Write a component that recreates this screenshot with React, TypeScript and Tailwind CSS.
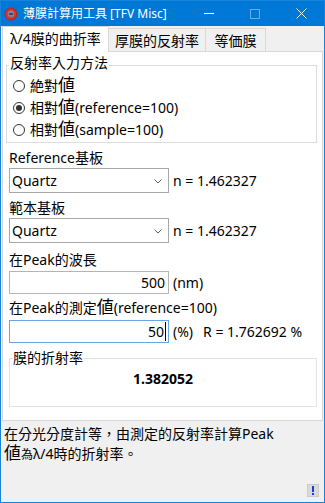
import type { ReactNode } from 'react';

const TABS = ['λ/4膜的曲折率', '厚膜的反射率', '等価膜'];
const TAB_WIDTHS = ['w-[107px]', 'w-[97px]', 'w-[60px]'];

function Big({ children }: { children: ReactNode }) {
  return <span className="text-[17px] leading-none">{children}</span>;
}

function Radio({ checked, children }: { checked?: boolean; children: ReactNode }) {
  return (
    <div className="flex h-[22px] items-center">
      <span className="ml-[6px] flex h-[12px] w-[12px] items-center justify-center rounded-full border border-[#333] bg-white">
        {checked ? <span className="h-[6px] w-[6px] rounded-full bg-[#333]" /> : null}
      </span>
      <span className="ml-[5px] text-[14px] leading-[20px]">{children}</span>
    </div>
  );
}

function Combo({ value, n }: { value: string; n: string }) {
  return (
    <div className="flex items-center">
      <div className="ml-[6px] flex h-[25px] w-[160px] items-center justify-between border border-[#a8a8a8] bg-white pl-[2px] pr-[6px]">
        <span className="text-[14px] leading-[20px]">{value}</span>
        <svg width="8" height="5" viewBox="0 0 8 5" className="mt-[1px]">
          <path d="M0.5 0.5 L4 4 L7.5 0.5" fill="none" stroke="#606060" strokeWidth="1" />
        </svg>
      </div>
      <span className="ml-[4px] text-[14px] leading-[20px]">{n}</span>
    </div>
  );
}

function Label({ children, className = '' }: { children: ReactNode; className?: string }) {
  return <div className={`ml-[6px] h-[20px] text-[14px] leading-[20px] ${className}`}>{children}</div>;
}

export default function App() {
  return (
    <div className="flex h-[503px] w-[325px] flex-col overflow-hidden border border-[#1883d7] bg-[#f0f0f0] font-['Noto_Sans','Noto_Sans_CJK_TC',sans-serif] text-black">
      {/* title bar */}
      <div className="flex h-[25px] shrink-0 items-center bg-[#0078d7] text-white">
        <svg width="14" height="14" viewBox="0 0 14 14" className="ml-[3px]">
          <circle cx="7" cy="7" r="6.5" fill="#b52a2e" />
          <circle cx="7" cy="7" r="5" fill="#d8383a" />
          <path d="M4 5 Q7 2 10 5 L10 9 Q7 11 4 9 Z" fill="#7d8796" />
          <path d="M5 6 L9 6 L9 8 L5 8 Z" fill="#3f4a5c" />
        </svg>
        <span className="ml-[5px] text-[12px] leading-[16px]">薄膜計算用工具 [TFV Misc]</span>
        <div className="ml-auto flex h-full">
          <div className="flex h-full w-[46px] items-center justify-center">
            <span className="h-[1px] w-[10px] bg-white" />
          </div>
          <div className="flex h-full w-[46px] items-center justify-center">
            <span className="h-[10px] w-[10px] border border-white/40" />
          </div>
          <div className="flex h-full w-[46px] items-center justify-center">
            <svg width="11" height="11" viewBox="0 0 11 11">
              <path d="M0.5 0.5 L10.5 10.5 M10.5 0.5 L0.5 10.5" stroke="white" strokeWidth="1" />
            </svg>
          </div>
        </div>
      </div>

      {/* tabs */}
      <div className="relative z-10 -mb-[1px] flex h-[26px] shrink-0 items-end pl-[1px]">
        {TABS.map((t, i) =>
          i === 0 ? (
            <div
              key={t}
              className={`flex h-[26px] ${TAB_WIDTHS[i]} items-center justify-center border-x border-t border-[#d9d9d9] bg-white pb-[1px] text-[14px] leading-[20px]`}
            >
              {t}
            </div>
          ) : (
            <div
              key={t}
              className={`mb-[1px] flex h-[23px] ${TAB_WIDTHS[i]} items-center justify-center border-t border-r border-[#d9d9d9] bg-[#f0f0f0] pt-[1px] text-[14px] leading-[20px]`}
            >
              {t}
            </div>
          ),
        )}
      </div>

      {/* panel */}
      <div className="mx-[1px] flex h-[370px] shrink-0 flex-col border border-[#d9d9d9] bg-white">
        <fieldset className="mt-[3px] ml-[3px] mr-[5px] border border-[#dcdcdc] pb-[1px]">
          <legend className="ml-[2px] px-[1px] pb-[4px] text-[14px] leading-[16px]">反射率入力方法</legend>
          <Radio>
            絶對<Big>値</Big>
          </Radio>
          <Radio checked>
            相對<Big>値</Big>(reference=100)
          </Radio>
          <Radio>
            相對<Big>値</Big>(sample=100)
          </Radio>
        </fieldset>

        <Label className="mt-[5px]">Reference基板</Label>
        <Combo value="Quartz" n="n = 1.462327" />

        <Label className="mt-[5px]">範本基板</Label>
        <Combo value="Quartz" n="n = 1.462327" />

        <Label className="mt-[7px]">在Peak的波長</Label>
        <div className="mt-[1px] flex items-center">
          <div className="ml-[6px] flex h-[23px] w-[160px] items-center justify-end border border-[#b4b4b4] bg-white pr-[3px] text-[14px] leading-[20px]">
            500
          </div>
          <span className="ml-[4px] text-[14px] leading-[20px]">(nm)</span>
        </div>

        <Label className="mt-[4px]">
          在Peak的測定<Big>値</Big>(reference=100)
        </Label>
        <div className="mt-[2px] flex items-center">
          <div className="ml-[6px] flex h-[23px] w-[160px] items-center justify-end border border-[#66a6e6] bg-white pr-[2px] text-[14px] leading-[20px]">
            <span>50</span>
            <span className="ml-[1px] h-[19px] w-[1px] bg-black" />
          </div>
          <span className="ml-[4px] text-[14px] leading-[20px]">(%)</span>
          <span className="ml-[10px] text-[14px] leading-[20px]">R = 1.762692 %</span>
        </div>

        <fieldset className="mt-[7px] ml-[6px] mr-[5px] border border-[#e3e3e3] pb-[17px]">
          <legend className="ml-[3px] text-[14px] leading-[16px]">膜的折射率</legend>
          <div className="mt-[3px] text-center text-[14px] font-bold leading-[20px]">1.382052</div>
        </fieldset>
      </div>

      {/* status */}
      <div className="flex flex-1 flex-col justify-between pt-[3px] pl-[3px]">
        <div className="text-[14px] leading-[19px]">
          <div className="h-[19px]">在分光分度計等，由測定的反射率計算Peak</div>
          <div className="flex h-[19px] items-baseline">
            <span className="inline-block text-[17px] leading-[19px]">値</span>
            <span className="inline-block text-[12px] leading-[15px]">為</span>
            <span className="inline-block leading-[19px]">λ/4時的折射率。</span>
          </div>
        </div>
        <div className="mr-[5px] mb-[5px] flex h-[13px] w-[12px] items-center justify-center self-end border border-[#cacaca] bg-[#dadada]">
          <svg width="4" height="9" viewBox="0 0 4 9">
            <rect x="1" y="0" width="2" height="6" fill="#1a3ce0" />
            <rect x="1" y="7" width="2" height="2" fill="#1a3ce0" />
          </svg>
        </div>
      </div>
    </div>
  );
}
